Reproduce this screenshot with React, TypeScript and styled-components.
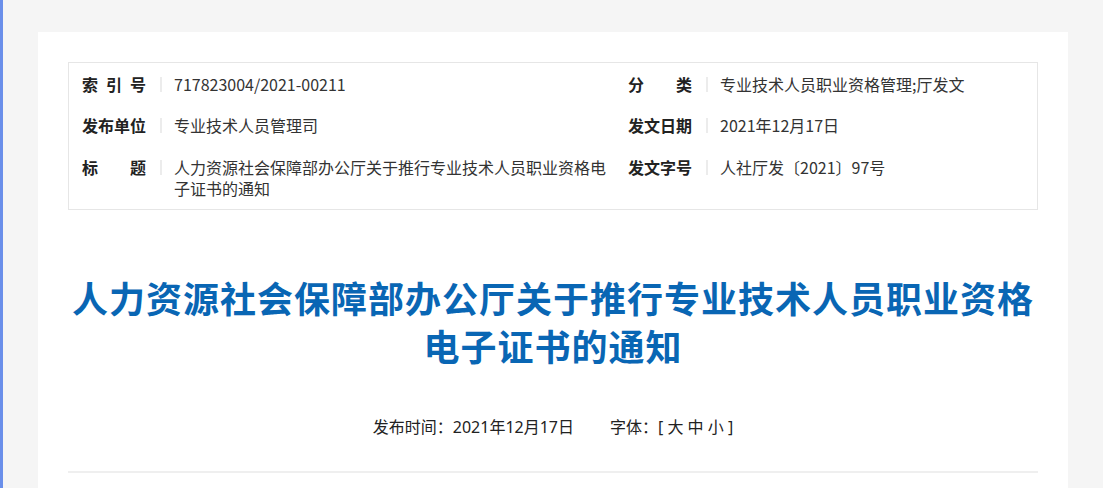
import React, { FC } from "react";
import styled, { createGlobalStyle } from "styled-components";

type Field = {
  label: string;
  value: string;
};

const leftFields: Field[] = [
  { label: "索引号", value: "717823004/2021-00211" },
  { label: "发布单位", value: "专业技术人员管理司" },
  { label: "标题", value: "人力资源社会保障部办公厅关于推行专业技术人员职业资格电子证书的通知" },
];

const rightFields: Field[] = [
  { label: "分类", value: "专业技术人员职业资格管理;厅发文" },
  { label: "发文日期", value: "2021年12月17日" },
  { label: "发文字号", value: "人社厅发〔2021〕97号" },
];

const InfoRow: FC<Field> = ({ label, value }) => (
  <Row>
    <Label>{label}</Label>
    <Divider />
    <Value>{value}</Value>
  </Row>
);

const App: FC = (): JSX.Element => {
  return (
    <>
      <GlobalStyle />
      <Page>
        <Card>
          <InfoTable>
            <Column>
              {leftFields.map((f) => (
                <InfoRow key={f.label} {...f} />
              ))}
            </Column>
            <Column>
              {rightFields.map((f) => (
                <InfoRow key={f.label} {...f} />
              ))}
            </Column>
          </InfoTable>

          <Title>
            人力资源社会保障部办公厅关于推行专业技术人员职业资格
            <br />
            电子证书的通知
          </Title>

          <Meta>
            <span>发布时间：2021年12月17日</span>
            <span>字体：[ 大 中 小 ]</span>
          </Meta>

          <Rule />
        </Card>
      </Page>
    </>
  );
};

export default App;

const GlobalStyle = createGlobalStyle`
  html, body {
    margin: 0;
    padding: 0;
    background: #f5f5f5;
  }
  body {
    border-left: 3px solid #6a8fea;
    font-family: "Noto Sans CJK SC", "Noto Sans", sans-serif;
    color: #333;
  }
`;

const Page = styled.div`
  display: flex;
  justify-content: center;
  padding-top: 32px;
`;

const Card = styled.div`
  width: 1030px;
  min-height: 520px;
  box-sizing: border-box;
  background: #fff;
  padding: 30px 30px 40px;
`;

const InfoTable = styled.div`
  display: grid;
  grid-template-columns: 546px 1fr;
  border: 1px solid #e6e6e6;
`;

const Column = styled.div`
  display: flex;
  flex-direction: column;
  padding: 0 6px 0 13px;
`;

const Row = styled.div`
  display: flex;
  align-items: flex-start;
  padding: 10.5px 0 10px;
  font-size: 16px;
  line-height: 21px;
`;

const Label = styled.div`
  width: 64px;
  flex-shrink: 0;
  font-weight: bold;
  color: #222;
  text-align: justify;
  text-align-last: justify;
`;

const Divider = styled.i`
  width: 2px;
  height: 15px;
  margin: 3px 12px 0 14px;
  background: #ececec;
  flex-shrink: 0;
`;

const Value = styled.div`
  flex: 1;
  color: #333;
`;

const Title = styled.h1`
  margin: 63px 0 0;
  text-align: center;
  font-size: 36px;
  line-height: 48px;
  letter-spacing: 1px;
  font-weight: bold;
  color: #0966b4;
`;

const Meta = styled.div`
  display: flex;
  justify-content: center;
  gap: 36px;
  margin-top: 48px;
  font-family: "Noto Sans", "Noto Sans CJK SC", sans-serif;
  font-size: 16px;
  line-height: 21px;
  color: #222;
`;

const Rule = styled.div`
  height: 2px;
  margin-top: 33px;
  background: #efefef;
`;
